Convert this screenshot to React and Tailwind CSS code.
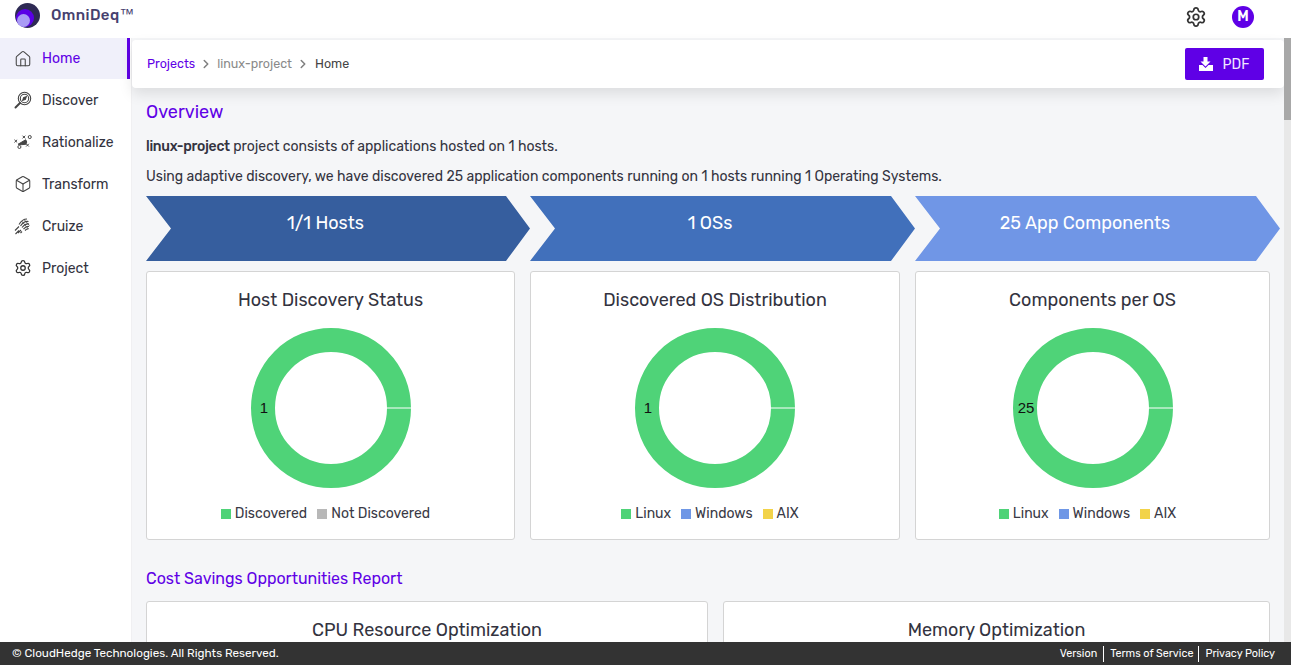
import React from "react";
import { House, Box, Settings, ChevronRight } from "lucide-react";

const DiscoverIcon = () => (
  <svg width="18" height="18" viewBox="0 0 18 18" fill="none" stroke="#444" strokeWidth="1.1">
    <circle cx="10.5" cy="7.5" r="6.2" />
    <circle cx="10.5" cy="7.5" r="4.2" />
    <path d="M8.7 9.3l.9-2.7 2.7-.9-.9 2.7z" fill="#444" />
    <path d="M6 12l-4.5 4.5" strokeWidth="2" strokeLinecap="round" />
  </svg>
);
const RationalizeIcon = () => (
  <svg width="20" height="18" viewBox="0 0 20 18" fill="none" stroke="#444" strokeWidth="1.1">
    <path d="M0.5 6.5l3 3M3.5 6.5l-3 3M9.5 2l3 3M12.5 2l-3 3M13.5 11l3 3M16.5 11l-3 3" />
    <circle cx="17.5" cy="3.5" r="1.7" />
    <circle cx="6" cy="14.5" r="1.7" />
    <path d="M4.5 11.5l8.5-5 1.2 2.5 -1 2.5-5 .5z" fill="#444" />
  </svg>
);
const CruizeIcon = () => (
  <svg width="18" height="18" viewBox="0 0 18 18" fill="none" stroke="#444" strokeWidth="1.1">
    <path d="M5 7.5c2-3.5 5-5.5 8-5.5M6.5 9c2-3 5-5 8-4.5M8 10.5c2-2.5 4.5-4 7-3.5M9.5 12c1.5-1.5 3.5-3 5.5-2.5M11 13.5c1-1 2.5-2 3.5-1.5" />
    <path d="M10 2.5l5.5 6M7.5 4l7 8" strokeWidth="0.8" />
    <path d="M1.5 17l3.5-3.5M4 16l3-3M1 13.5l4-4M6.5 16l1.5-1.5" />
  </svg>
);
const TrayDownload = () => (
  <svg width="14" height="14" viewBox="0 0 14 14" fill="#fff">
    <path d="M4.5 0h4v4.5h3L6.5 9.5 1.5 4.5h3z" />
    <path d="M0 8h3.5l3 3 3-3H14v6H0z" />
  </svg>
);

const nav = [
  ["Home", <House size={18} strokeWidth={1.4} color="#444" />, true],
  ["Discover", <DiscoverIcon />],
  ["Rationalize", <RationalizeIcon />],
  ["Transform", <Box size={18} strokeWidth={1.4} color="#444" />],
  ["Cruize", <CruizeIcon />],
  ["Project", <Settings size={18} strokeWidth={1.7} color="#333" />],
];

function Donut({ label, x }) {
  return (
    <svg width="160" height="160" viewBox="0 0 160 160" className="mt-[17px] shrink-0">
      <circle cx="80" cy="80" r="68" fill="none" stroke="#4fd378" strokeWidth="24" />
      <line x1="135" y1="80" x2="160" y2="80" stroke="#fff" strokeWidth="1" />
      <text x={x} y="85" fontSize="15" fill="#111" textAnchor="middle" fontFamily="Liberation Sans, sans-serif">{label}</text>
    </svg>
  );
}

function Legend({ items }) {
  return (
    <div className="flex justify-center gap-[10px] mt-[16px] pr-[10px] text-[14px] leading-[20px] text-[#3a3a46]">
      {items.map(([t, c]) => (
        <div key={t} className="flex items-center gap-[4px]">
          <span className={`w-[10px] h-[10px] ${c}`} />
          <span>{t}</span>
        </div>
      ))}
    </div>
  );
}

function Card({ title, w, label, x, items, ml }) {
  return (
    <div className={`${w} ${ml || ""} h-[269px] shrink-0 bg-white border border-[#d4d4d4] rounded-[3px] flex flex-col items-center pt-[17px]`}>
      <div className="text-[18px] leading-[22px] text-[#333340]">{title}</div>
      <Donut label={label} x={x} />
      <Legend items={items} />
    </div>
  );
}

const osItems = [["Linux", "bg-[#4fd378]"], ["Windows", "bg-[#6f97e6]"], ["AIX", "bg-[#f2d349]"]];

function Chevron({ text, w, color }) {
  return (
    <div
      className={`${w} ${color} h-[65px] shrink-0 flex items-center justify-center text-white text-[18px] pb-[10px] pr-[25px]`}
      style={{ clipPath: "polygon(0 0, calc(100% - 24px) 0, 100% 50%, calc(100% - 24px) 100%, 0 100%, 25px 50%)" }}
    >
      <span>{text}</span>
    </div>
  );
}

export default function App() {
  return (
    <div className="h-[665px] w-[1291px] overflow-hidden flex flex-col bg-[#f5f6f8] font-['Rubik','Inter','Roboto',sans-serif] text-[#333340]">
      <header className="h-[38px] shrink-0 bg-white flex items-center pl-[15px] pr-[37px] justify-between">
        <div className="flex items-center gap-[11px] -mt-[8px]">
          <svg width="25" height="25" viewBox="0 0 25 25">
            <circle cx="12.5" cy="12.5" r="12.5" fill="#2e2a54" />
            <circle cx="10" cy="15" r="9" fill="#5a00e6" />
            <circle cx="8.5" cy="17.5" r="6.5" fill="#a99bf5" />
          </svg>
          <span className="text-[15px] leading-[20px] font-medium tracking-[0.4px] text-[#46406e] flex">
            OmniDeq<span className="font-['Liberation_Sans'] text-[15px] leading-[17px] font-normal">™</span>
          </span>
        </div>
        <div className="flex items-center gap-[25px] -mt-[5px]">
          <Settings size={22} strokeWidth={1.9} color="#333" />
          <div className="w-[22px] h-[22px] rounded-full bg-[#5f00e6] text-white text-[14px] font-semibold flex items-center justify-center">M</div>
        </div>
      </header>
      <div className="flex-1 min-h-0 flex">
        <aside className="w-[132px] shrink-0 bg-white border-r border-[#f0f0f2]">
          {nav.map(([t, icon, active]) => (
            <div
              key={t}
              className={`flex items-center pl-[14px] text-[14px] ${active ? "h-[41px] bg-[#f0f0fa] text-[#5f00e6] border-r-[3px] border-[#5f00e6] mr-[1px]" : "h-[42px] text-[#333340]"}`}
            >
              <span className="w-[18px] flex justify-center mr-[10px]">{icon}</span>
              {t}
            </div>
          ))}
        </aside>
        <main className="flex-1 min-w-0 flex flex-col pt-[2px]">
          <div className="h-[48px] shrink-0 bg-white rounded-[4px] shadow-[0_6px_14px_rgba(0,0,0,0.1)] flex items-center justify-between pl-[15px] pr-[20px]">
            <div className="flex items-center text-[12.5px]">
              <span className="text-[#5f00e6]">Projects</span>
              <ChevronRight size={14} strokeWidth={2.6} color="#808080" className="mx-[4px]" />
              <span className="text-[#8a8a8a]">linux-project</span>
              <ChevronRight size={14} strokeWidth={2.6} color="#808080" className="ml-[4px] mr-[5px]" />
              <span className="text-[#444]">Home</span>
            </div>
            <div className="w-[79px] h-[32px] bg-[#5f00e6] rounded-[2px] flex items-center justify-center gap-[10px] pr-[1px] text-[#f0e8ff] text-[14px]">
              <TrayDownload />
              <span>PDF</span>
            </div>
          </div>
          <div className="pl-[14px] flex-1 min-h-0 overflow-hidden">
            <div className="text-[18px] leading-[22px] text-[#5f00e6] mt-[13px]">Overview</div>
            <p className="text-[14px] leading-[20px] mt-[14px]"><b className="font-medium tracking-[-0.3px]">linux-project</b> project consists of applications hosted on 1 hosts.</p>
            <p className="text-[14px] leading-[20px] mt-[10px]">Using adaptive discovery, we have discovered 25 application components running on 1 hosts running 1 Operating Systems.</p>
            <div className="flex mt-[9px]">
              <Chevron text="1/1 Hosts" w="w-[384px]" color="bg-[#365e9e]" />
              <Chevron text="1 OSs" w="w-[385px]" color="bg-[#4170bb]" />
              <Chevron text="25 App Components" w="w-[365px]" color="bg-[#7096e6]" />
            </div>
            <div className="flex mt-[10px]">
              <Card title="Host Discovery Status" w="w-[369px]" label="1" x="13" items={[["Discovered", "bg-[#4fd378]"], ["Not Discovered", "bg-[#b8b8b8]"]]} />
              <Card title="Discovered OS Distribution" w="w-[370px]" ml="ml-[15px]" label="1" x="13" items={osItems} />
              <Card title="Components per OS" w="w-[355px]" ml="ml-[15px]" label="25" x="13" items={osItems} />
            </div>
            <div className="text-[16px] leading-[20px] text-[#5f00e6] mt-[29px] tracking-[-0.02px]">Cost Savings Opportunities Report</div>
            <div className="flex mt-[12px]">
              <div className="w-[562px] h-[100px] shrink-0 bg-white border border-[#d4d4d4] rounded-[3px] text-center text-[18px] leading-[22px] pt-[17px]">CPU Resource Optimization</div>
              <div className="w-[547px] h-[100px] ml-[15px] shrink-0 bg-white border border-[#d4d4d4] rounded-[3px] text-center text-[18px] leading-[22px] pt-[17px]">Memory Optimization</div>
            </div>
          </div>
        </main>
        <div className="w-[7px] shrink-0 bg-[#e8e8e8]">
          <div className="h-[82px] bg-[#a8a8a8]" />
        </div>
      </div>
      <footer className="h-[23px] shrink-0 bg-[#333] text-white flex items-center justify-between pl-[12px] pr-[16px] pt-[1px]">
        <span className="text-[11.7px]">© CloudHedge Technologies. All Rights Reserved.</span>
        <div className="flex items-center text-[10.8px]">
          <span className="pr-[6px] border-r border-white leading-[16px]">Version</span>
          <span className="pl-[6px] pr-[5px] border-r border-white leading-[16px]">Terms of Service</span>
          <span className="pl-[6px] leading-[16px]">Privacy Policy</span>
        </div>
      </footer>
    </div>
  );
}
